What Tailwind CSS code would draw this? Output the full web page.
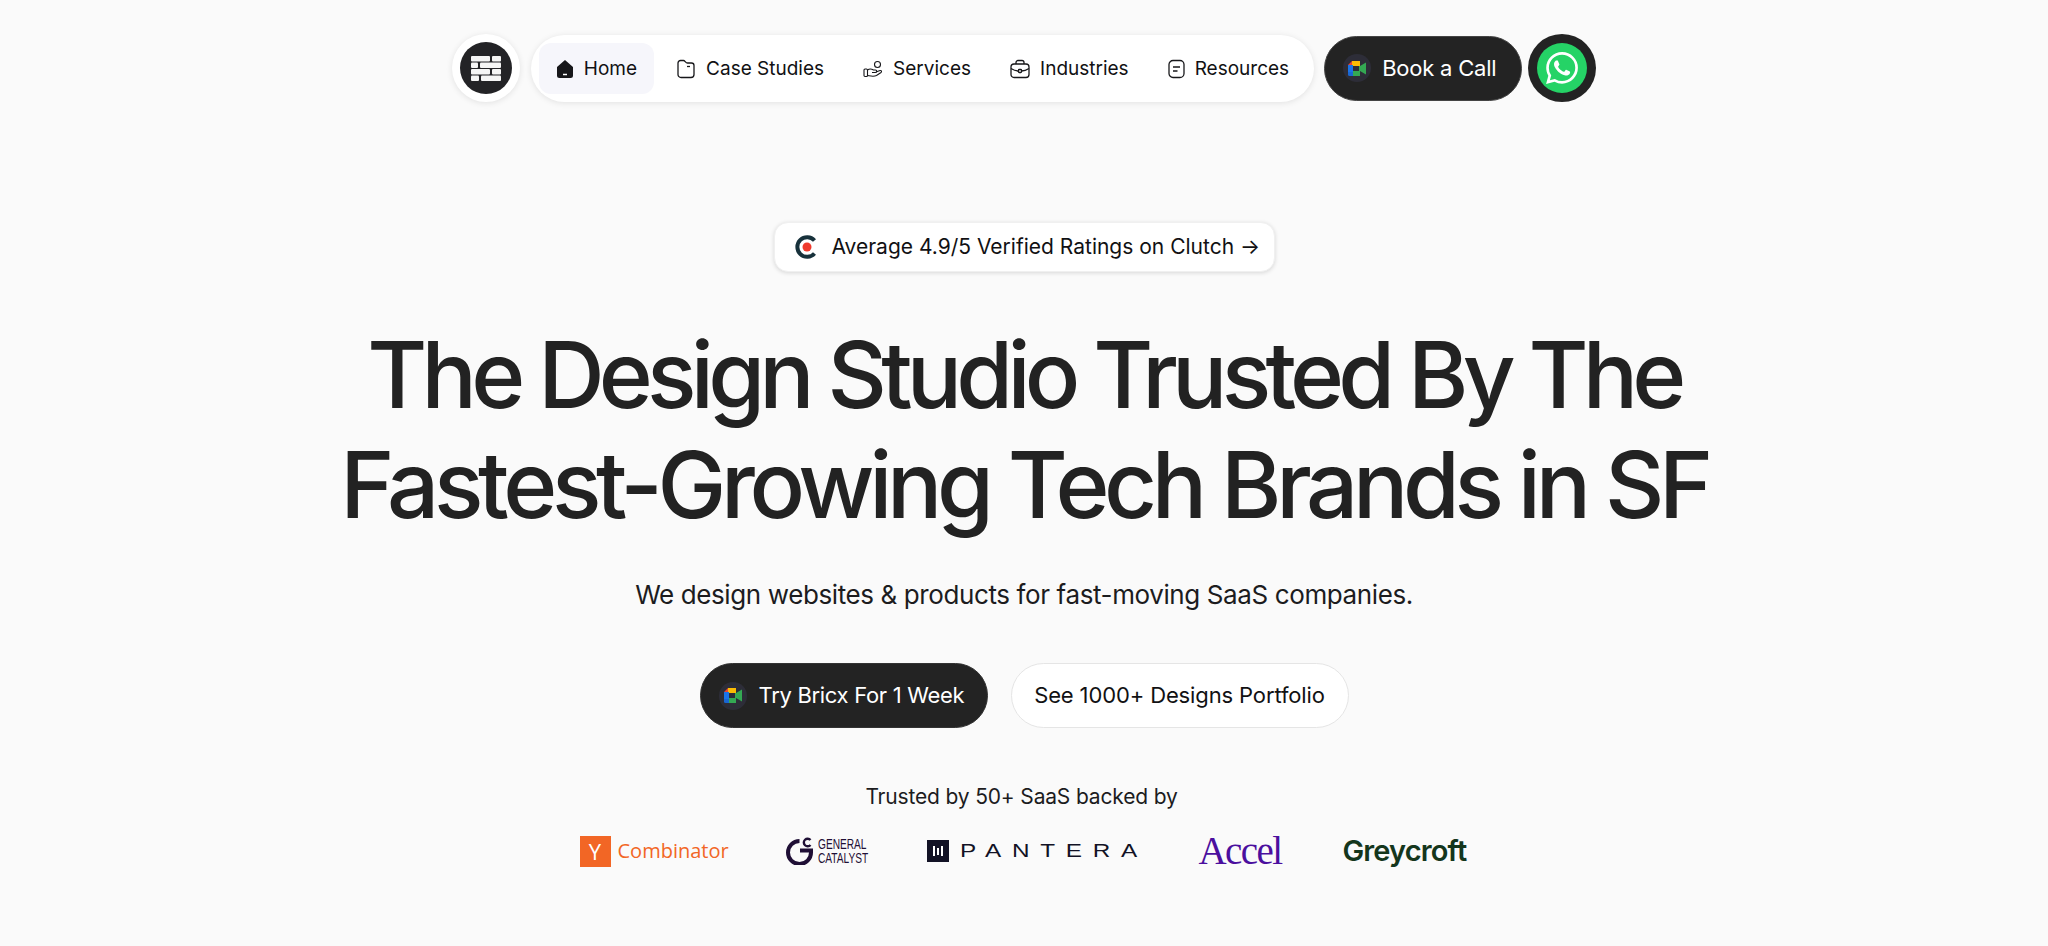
<!DOCTYPE html>
<html lang="en">
<head>
    <meta charset="UTF-8">
    <meta name="viewport" content="width=device-width, initial-scale=1.0">
    <title>Bricx</title>
    <script src="https://cdn.jsdelivr.net/npm/@tailwindcss/browser@4"></script>
</head>
<body class="bg-[#fafafa] font-['Inter',sans-serif] text-[#111113] min-h-screen overflow-hidden">

<!-- Top nav -->
<header class="flex justify-center items-center pt-[34px] h-[102px]">
    <a class="flex items-center justify-center w-[68px] h-[68px] rounded-full bg-white shadow-[0_1px_6px_rgba(0,0,0,0.1)]">
        <span class="flex items-center justify-center w-[52px] h-[52px] rounded-full bg-[#232326]">
            <svg width="30" height="25" viewBox="0 0 30 25" fill="#f5f5f5">
                <rect x="0" y="0" width="19" height="5.500" rx="1"/><rect x="21" y="0" width="9" height="5.500" rx="1"/>
                <rect x="0" y="6.500" width="7" height="5.500" rx="1"/><rect x="9" y="6.500" width="21" height="5.500" rx="1"/>
                <rect x="0" y="13" width="19" height="5.500" rx="1"/><rect x="21" y="13" width="9" height="5.500" rx="1"/>
                <rect x="0" y="19.500" width="8" height="5.500" rx="1"/><rect x="10" y="19.500" width="20" height="5.500" rx="1"/>
            </svg>
        </span>
    </a>
    <nav class="ml-[11px] flex items-center gap-[5px] h-[67px] px-[8px] rounded-full bg-white shadow-[0_1px_6px_rgba(0,0,0,0.1)] text-[19px]">
        <a class="flex items-center gap-[10px] h-[51px] pt-[2px] px-[17px] rounded-[12px] bg-[#f6f6fb]">
            <svg width="18" height="20" viewBox="0 0 18 20"><path fill="#17171a" d="M1 8 9 1l8 7v8.500a2.500 2.500 0 0 1-2.500 2.500h-11A2.500 2.500 0 0 1 1 16.500z"/><path stroke="#fff" stroke-width="1.500" d="M7 15.500h4"/></svg>
            Home
        </a>
        <a class="flex items-center gap-[10px] h-[51px] pt-[2px] px-[17px]">
            <svg width="20" height="20" viewBox="0 0 20 20" fill="none" stroke="#17171a" stroke-width="1.300"><path d="M2 4a2.500 2.500 0 0 1 2.500-2.500h3c1.500 0 2 2.500 4 2.500h4a2.500 2.500 0 0 1 2.500 2.500v9a3 3 0 0 1-3 3H5a3 3 0 0 1-3-3z"/><path d="M11 7.500h3"/></svg>
            Case Studies
        </a>
        <a class="flex items-center gap-[10px] h-[51px] pt-[2px] px-[17px]">
            <svg width="20" height="20" viewBox="0 0 20 20" fill="none" stroke="#17171a" stroke-width="1.100"><circle cx="14.500" cy="5.500" r="3"/><rect x="1" y="10" width="3.500" height="7.500" rx="1"/><path d="M4.500 11c2-1.500 3.500-1.500 6 0h2a1.200 1.200 0 0 1 0 2.500H9"/><path d="m13 13 4-1.500c1.500-.3 2 1 1 2l-4.500 3c-3 1.500-6 .5-9 0"/></svg>
            Services
        </a>
        <a class="flex items-center gap-[10px] h-[51px] pt-[2px] px-[17px]">
            <svg width="20" height="20" viewBox="0 0 20 20" fill="none" stroke="#17171a" stroke-width="1.300"><rect x="1" y="5" width="18" height="13.500" rx="3"/><path d="M6 5V3.500A2 2 0 0 1 8 1.500h4a2 2 0 0 1 2 2V5"/><path d="M1 9.500c3 2 5 2.500 7.500 2.500M19 9.500c-3 2-5 2.500-7.500 2.500"/><rect x="8.500" y="10.500" width="3" height="3" rx=".8"/></svg>
            Industries
        </a>
        <a class="flex items-center gap-[10px] h-[51px] pt-[2px] px-[17px]">
            <svg width="17" height="20" viewBox="0 0 17 20" fill="none" stroke="#17171a" stroke-width="1.300"><rect x="1" y="1.500" width="15" height="17" rx="4"/><path d="M5 8h7M5 12h4.500"/></svg>
            Resources
        </a>
    </nav>
    <a class="ml-[10px] flex items-center gap-[11px] h-[65px] w-[198px] pl-[18px] rounded-full bg-[#232323] border border-[#444] text-white text-[22px] tracking-[-0.01em] whitespace-nowrap">
        <span class="flex items-center justify-center w-[28px] h-[28px] rounded-full bg-[#2d2d38] shrink-0">
            <svg width="18" height="15" viewBox="0 0 18 15"><path fill="#fbbc04" d="M4 0h8v5H4z"/><path fill="#ea4335" d="M4 0v4H0z"/><path fill="#1a73e8" d="M0 4h5v7H0z"/><path fill="#1967d2" d="M0 11h5v4H1.500A1.500 1.500 0 0 1 0 13.500z"/><path fill="#34a853" d="M5 10h7v5H5zM11 5h1v5h-1zM12 5v5l6 3.500V1.500z"/></svg>
        </span>
        Book a Call
    </a>
    <a class="ml-[6px] flex items-center justify-center w-[68px] h-[68px] rounded-full bg-[#232323]">
        <span class="flex items-center justify-center w-[50px] h-[50px] rounded-full bg-[#25d366]">
            <svg width="32" height="32" viewBox="0 0 24 24" fill="#fff"><path d="M17.472 14.382c-.297-.149-1.758-.867-2.030-.967-.273-.099-.471-.148-.670.150-.197.297-.767.966-.940 1.164-.173.199-.347.223-.644.075-.297-.150-1.255-.463-2.390-1.475-.883-.788-1.480-1.761-1.653-2.059-.173-.297-.018-.458.130-.606.134-.133.298-.347.446-.520.149-.174.198-.298.298-.497.099-.198.050-.371-.025-.520-.075-.149-.669-1.612-.916-2.207-.242-.579-.487-.500-.669-.510-.173-.008-.371-.010-.570-.010-.198 0-.520.074-.792.372-.272.297-1.040 1.016-1.040 2.479 0 1.462 1.065 2.875 1.213 3.074.149.198 2.096 3.200 5.077 4.487.709.306 1.262.489 1.694.625.712.227 1.360.195 1.871.118.571-.085 1.758-.719 2.006-1.413.248-.694.248-1.289.173-1.413-.074-.124-.272-.198-.570-.347m-5.421 7.403h-.004a9.870 9.870 0 0 1-5.031-1.378l-.361-.214-3.741.982.998-3.648-.235-.374a9.860 9.860 0 0 1-1.510-5.260c.001-5.450 4.436-9.884 9.888-9.884 2.640 0 5.122 1.030 6.988 2.898a9.825 9.825 0 0 1 2.893 6.994c-.003 5.450-4.437 9.884-9.885 9.884m8.413-18.297A11.815 11.815 0 0 0 12.050 0C5.495 0 .160 5.335.157 11.892c0 2.096.547 4.142 1.588 5.945L.057 24l6.305-1.654a11.882 11.882 0 0 0 5.683 1.448h.005c6.554 0 11.890-5.335 11.893-11.893a11.821 11.821 0 0 0-3.480-8.413z"/></svg>
        </span>
    </a>
</header>

<!-- Hero -->
<main class="flex flex-col items-center">
    <a class="mt-[120px] flex items-center gap-[14px] h-[50px] w-[501px] pl-[20px] rounded-[14px] bg-white border border-[#f0f0f0] shadow-[0_1px_4px_rgba(0,0,0,0.14)] text-[21px] whitespace-nowrap">
        <svg width="23" height="24" viewBox="0 0 23 24" class="shrink-0"><path fill="none" stroke="#17313b" stroke-width="4" d="M19.500 18.500a9.800 9.800 0 1 1 0-13"/><circle cx="12" cy="12" r="4.500" fill="#ef3a2d"/></svg>
        Average 4.9/5 Verified Ratings on Clutch →
    </a>

    <h1 class="mt-[48px] text-center text-[92px] leading-[110px] font-[540] tracking-[-0.063em] text-[#222222] whitespace-nowrap">
        The Design Studio Trusted By The<br><span class="tracking-[-0.058em]">Fastest-Growing Tech Brands in SF</span>
    </h1>

    <p class="mt-[35px] text-[26px] leading-[40px] tracking-[-0.015em] text-[#1c1c1e]">We design websites &amp; products for fast-moving SaaS companies.</p>

    <div class="mt-[48px] flex items-center gap-[23px]">
        <a class="flex items-center gap-[12px] h-[65px] w-[288px] pl-[18px] rounded-full bg-[#232323] border border-[#333] text-white text-[22px] tracking-[-0.014em]">
            <span class="flex items-center justify-center w-[28px] h-[28px] rounded-full bg-[#2d2d38]">
                <svg width="18" height="15" viewBox="0 0 18 15"><path fill="#fbbc04" d="M4 0h8v5H4z"/><path fill="#ea4335" d="M4 0v4H0z"/><path fill="#1a73e8" d="M0 4h5v7H0z"/><path fill="#1967d2" d="M0 11h5v4H1.500A1.500 1.500 0 0 1 0 13.500z"/><path fill="#34a853" d="M5 10h7v5H5zM11 5h1v5h-1zM12 5v5l6 3.500V1.500z"/></svg>
            </span>
            Try Bricx For 1 Week
        </a>
        <a class="flex items-center justify-center h-[65px] w-[338px] rounded-full bg-white border border-[#e5e5e5] text-[22px] tracking-[-0.006em]">See 1000+ Designs Portfolio</a>
    </div>

    <p class="mt-[54px] pr-[5px] text-[21px] leading-[30px] tracking-[-0.008em] text-[#1c1c1e]">Trusted by 50+ SaaS backed by</p>

    <!-- Investor logos -->
    <div class="mt-[19px] flex items-center w-[889px] h-[40px]">
        <div class="flex items-center gap-[7px] w-[206px]">
            <span class="flex items-center justify-center w-[31px] h-[31px] bg-[#f26625] text-white text-[22px] font-['Open_Sans',sans-serif]">Y</span>
            <span class="font-['Open_Sans',sans-serif] text-[#f26625] text-[20px]">Combinator</span>
        </div>
        <div class="flex items-center gap-[5px] w-[141px]">
            <svg width="27" height="28" viewBox="0 0 27 28" fill="none" stroke="#1f0f35"><path stroke-width="4" d="M13.500 4A11.500 11.500 0 1 0 25 15.500v-2H14"/><path stroke-width="2.400" d="M24.500 3a3.800 3.800 0 1 0 0 5"/></svg>
            <span class="font-['Liberation_Sans',sans-serif] text-[#1f0f35] text-[14.500px] leading-[14px] scale-x-[0.7] origin-left w-[49px] whitespace-nowrap">GENERAL<br>CATALYST</span>
        </div>
        <div class="flex items-center gap-[11px] w-[272px]">
            <span class="flex items-center justify-center gap-[2px] w-[22px] h-[22px] bg-[#121225]">
                <i class="w-[2px] h-[10px] bg-white"></i><i class="w-[2px] h-[7px] bg-white"></i><i class="w-[2px] h-[10px] bg-white"></i>
            </span>
            <span class="font-['Liberation_Sans',sans-serif] text-[#121225] text-[18px] tracking-[0.44em] scale-x-[1.35] origin-left whitespace-nowrap">PANTERA</span>
        </div>
        <span class="font-['Liberation_Serif',serif] text-[#4b0f9e] text-[39px] leading-[40px] tracking-[-0.04em] w-[144px]">Accel</span>
        <span class="text-[#14361c] text-[29px] leading-[40px] font-semibold tracking-[-0.03em]">Greycroft</span>
    </div>
</main>

</body>
</html>
